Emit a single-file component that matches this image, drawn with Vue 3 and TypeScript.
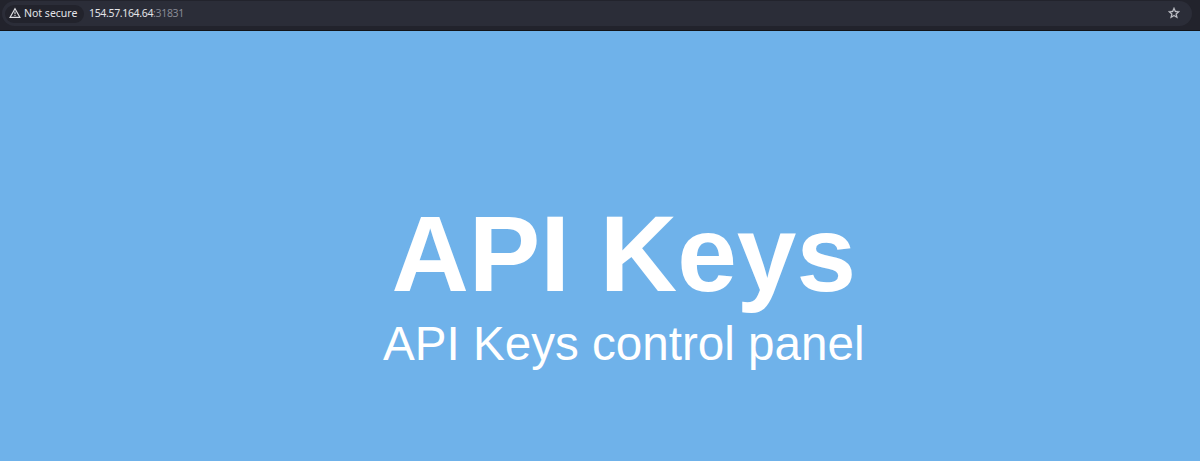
<script setup lang="ts">
const host: string = '154.57.164.64'
const port: string = ':31831'
</script>

<template>
  <div class="window">
    <header class="toolbar">
      <div class="omnibox">
        <div class="chip">
          <svg class="warn" viewBox="0 0 12 12" width="12" height="12">
            <path d="M6 1.7 L10.9 10.3 H1.1 Z" fill="none" stroke="#dfe0e4" stroke-width="1.2" stroke-linejoin="miter" />
            <path d="M6 4.4 V7.2 M6 8 V9.1" stroke="#dfe0e4" stroke-width="1.1" />
          </svg>
          <span>Not secure</span>
        </div>
        <div class="url">{{ host }}<span class="port">{{ port }}</span></div>
        <svg class="star" viewBox="0 0 24 24" width="14" height="14">
          <path
            d="M22 9.24l-7.19-.62L12 2 9.19 8.63 2 9.24l5.46 4.73L5.82 21 12 17.27 18.18 21l-1.63-7.03L22 9.24zM12 15.4l-3.76 2.27 1-4.28-3.32-2.88 4.38-.38L12 6.1l1.71 4.04 4.38.38-3.32 2.88 1 4.28L12 15.4z"
            fill="#c6c8ce"
            stroke="#c6c8ce"
            stroke-width="0.5"
          />
        </svg>
      </div>
    </header>
    <main class="page">
      <h1>API Keys</h1>
      <p>API Keys control panel</p>
    </main>
  </div>
</template>

<style>
body {
  margin: 0;
  background: #6fb2ea;
}
</style>

<style scoped>
.window {
  width: 1200px;
  height: 461px;
  overflow: hidden;
  display: flex;
  flex-direction: column;
}
.toolbar {
  box-sizing: border-box;
  height: 31px;
  flex: none;
  padding: 1px 8px 0 2px;
  background: #22232c;
  border-bottom: 1px solid #121318;
}
.omnibox {
  box-sizing: border-box;
  height: 25px;
  border-radius: 13px;
  background: #2b2d38;
  display: flex;
  align-items: center;
  padding: 0 11px 0 3px;
  font: 10.5px/15px "Noto Sans", sans-serif;
  color: #e3e4e8;
}
.chip {
  box-sizing: border-box;
  height: 18px;
  width: 79px;
  border-radius: 9px;
  background: #22232c;
  display: flex;
  align-items: center;
  padding-left: 4px;
  gap: 3px;
  white-space: nowrap;
}
.chip span {
  margin-top: -1px;
}
.warn,
.star {
  flex: none;
  margin-bottom: 1px;
}
.url {
  margin-left: 5px;
  flex: 1;
  font-size: 10.5px;
  letter-spacing: -0.34px;
}
.port {
  color: #878994;
}
.page {
  flex: 1;
  box-sizing: border-box;
  padding: 161px 0 0 47.5px;
  background: #6fb2ea;
  color: #fff;
  text-align: center;
  font-family: "Liberation Sans", Arial, sans-serif;
}
h1 {
  margin: 0;
  font-size: 107.2px;
  line-height: 125px;
}
p {
  margin: 0;
  font-size: 47.6px;
  line-height: 54px;
}
</style>
